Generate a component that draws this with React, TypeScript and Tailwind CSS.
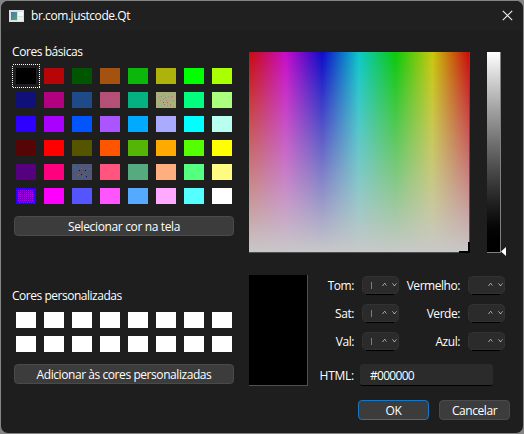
import React from "react";

const basicColors: string[][] = [
  ["#000000", "#b70507", "#005500", "#a35210", "#0ab70a", "#adb30a", "#00ff00", "#aaff00"],
  ["#10107a", "#b10080", "#1e4b87", "#b45078", "#05b180", "#aab07c", "#00ff7f", "#aaff7f"],
  ["#2d00ff", "#aa00ff", "#0055ff", "#aa55ff", "#00aaff", "#aaaaff", "#00ffff", "#b8fff0"],
  ["#550505", "#ff0000", "#555500", "#ff5500", "#55b507", "#ffaa00", "#55ff00", "#ffff00"],
  ["#55007f", "#ff007f", "#50587a", "#ff557f", "#55aa7f", "#ffaf7f", "#55ff7f", "#fffa82"],
  ["#2d00ff", "#ff00ff", "#5555ff", "#ff55ff", "#55aaff", "#ffaaff", "#55ffff", "#ffffff"],
];

// Dither specks inside a few swatches, as [x, y, colour].
const specks: Record<string, [number, number, string][]> = {
  "1-3": [[3, 6, "#8d6b80"], [7, 4, "#a56464"], [11, 3, "#8d6b80"], [15, 4, "#a56464"], [5, 9, "#8d6b80"], [9, 7, "#a56464"], [13, 7, "#8d6b80"], [17, 8, "#8d6b80"], [4, 13, "#8d6b80"], [8, 11, "#8d6b80"], [12, 13, "#8d6b80"], [14, 10, "#a56464"], [16, 13, "#8d6b80"]],
  "1-5": [[3, 4, "#c58a7c"], [5, 4, "#9a8a7a"], [8, 3, "#c58a7c"], [9, 5, "#b07a80"], [12, 4, "#9090a0"], [16, 4, "#c87080"], [15, 5, "#9a8a80"], [4, 8, "#9a8aa0"], [7, 7, "#9a8a7a"], [10, 8, "#c87080"], [13, 8, "#c58a7c"], [16, 9, "#9090a0"], [17, 8, "#c58a7c"], [7, 10, "#6f6070"], [11, 10, "#80708a"], [2, 13, "#9a8aa0"], [5, 13, "#c58a7c"], [8, 12, "#8a7080"], [14, 12, "#c87080"], [14, 13, "#c87080"], [17, 14, "#c58a7c"], [11, 13, "#9a8aa0"]],
  "4-2": [[7, 6, "#250060"], [13, 6, "#250060"], [9, 10, "#250060"], [14, 12, "#200050"], [15, 12, "#b03060"], [8, 6, "#8b4040"], [4, 4, "#306898"], [11, 3, "#306898"], [3, 8, "#306898"], [6, 10, "#806050"], [11, 8, "#306898"], [16, 9, "#306898"], [12, 12, "#306898"], [4, 13, "#306898"], [17, 4, "#706a60"], [5, 11, "#806050"], [10, 13, "#806050"], [15, 6, "#306898"], [9, 4, "#706a60"], [2, 3, "#706a60"], [12, 10, "#806050"], [17, 13, "#306898"]],
};

for (let y = 2; y < 15; y += 2)
  for (let x = 2; x < 18; x += 2)
    (specks["5-0"] ??= []).push([x + (y === 14 ? 1 : 0), y, "#a800ef"]);

function Swatch({ color, id, selected }: { color: string; id: string; selected?: boolean }) {
  return (
    <div className="relative h-4 w-5" style={{ backgroundColor: color }}>
      {specks[id] && (
        <svg className="block" width="20" height="16" shapeRendering="crispEdges">
          {specks[id].map(([x, y, c], i) => (
            <rect key={i} x={x} y={y} width="1" height="1" fill={c} />
          ))}
        </svg>
      )}
      {selected && (
        <svg className="absolute -left-1 -top-1" width="28" height="24" shapeRendering="crispEdges">
          <rect x="0.5" y="0.5" width="27" height="23" fill="none" stroke="#fff" strokeDasharray="1 1" />
        </svg>
      )}
    </div>
  );
}

function Button({ children, className = "" }: { children: React.ReactNode; className?: string }) {
  return (
    <button
      className={`flex h-5 items-center justify-center rounded-[4px] border bg-[#3c3c3c] pt-px whitespace-nowrap ${className}`}
    >
      {children}
    </button>
  );
}

// Chevron pixels with subpixel colour fringes, as [x, y, colour].
const chevrons: [number, number, string][] = [
  [20, 9, "#4a86c8"], [21, 8, "#7c9cc0"], [22, 7, "#d8925c"], [23, 8, "#d8925c"], [24, 9, "#7a6252"], [21, 9, "#6a5244"], [23, 7, "#4a5a70"],
  [30, 7, "#a8744c"], [31, 8, "#d8925c"], [32, 9, "#d8a078"], [33, 8, "#5c98dc"], [34, 7, "#4a86c8"], [31, 9, "#44566c"], [33, 9, "#44566c"],
];

function SpinBox({ cursor }: { cursor?: boolean }) {
  return (
    <svg className="block" width="37" height="19" viewBox="0 0 37 19">
      <rect x="0.5" y="0.5" width="36" height="17" rx="4" fill="#2b2b2b" stroke="#414141" strokeDasharray="1 1" />
      <path d="M4 18.5H32" stroke="#000" />
      {cursor && <path d="M9.5 6V13" stroke="#3b8cdc" />}
      {chevrons.map(([x, y, c], i) => (
        <rect key={i} x={x} y={y} width="1" height="1" fill={c} />
      ))}
    </svg>
  );
}

export default function App() {
  return (
    <div className="h-[434px] w-[524px] bg-[#858585] p-px font-['Open_Sans','Noto_Sans',sans-serif] text-[12px] leading-4 tracking-[-0.43px] text-white">
      <div className="flex h-[432px] w-[522px] flex-col overflow-hidden rounded-[7px] bg-[#1e1e1e]">
        <header className="flex h-[30px] shrink-0 items-center bg-[#202020] pl-2 pr-[10px]">
          <svg width="15" height="12" viewBox="0 0 15 12" className="-mt-px shrink-0">
            <defs>
              <linearGradient id="app-icon" x1="0" y1="0" x2="1" y2="1">
                <stop offset="0" stopColor="#4777b8" />
                <stop offset="1" stopColor="#55a66c" />
              </linearGradient>
            </defs>
            <rect width="15" height="12" fill="#dce1e6" />
            <rect x="2" y="2" width="6" height="8" fill="url(#app-icon)" />
            <rect x="9" y="2" width="5" height="4" fill="#f8f8f8" />
            <rect x="9" y="7" width="5" height="4" fill="#eceef2" />
          </svg>
          <span className="ml-[7px]">br.com.justcode.Qt</span>
          <svg className="-mt-[2px] ml-auto" width="11" height="11" viewBox="0 0 11 11">
            <path d="M0.8 0.8L10.2 10.2M10.2 0.8L0.8 10.2" stroke="#f0f0f0" strokeWidth="1.1" />
          </svg>
        </header>

        <div className="flex grow">
          <section className="flex w-[248px] shrink-0 flex-col pl-[11px] pt-[13px]">
            <div className="h-4">Cores básicas</div>
            <div className="ml-1 mt-2 grid w-[216px] grid-cols-8 gap-2">
              {basicColors.flatMap((row, r) =>
                row.map((c, i) => (
                  <Swatch key={`${r}-${i}`} id={`${r}-${i}`} color={c} selected={r === 0 && i === 0} />
                )),
              )}
            </div>
            <Button className="ml-[2px] mt-3 w-[220px] border-[#4a4a4c] tracking-[-0.36px]">Selecionar cor na tela</Button>
            <div className="mt-[52px] h-4 tracking-[-0.48px]">Cores personalizadas</div>
            <div className="ml-1 mt-2 grid w-[216px] grid-cols-8 gap-2">
              {Array.from({ length: 16 }, (_, i) => (
                <Swatch key={i} id={`c${i}`} color="#ffffff" />
              ))}
            </div>
            <Button className="ml-[2px] mt-3 w-[220px] border-[#4a4a4c]">Adicionar às cores personalizadas</Button>
          </section>

          <section className="flex grow flex-col pt-[21px]">
            <div className="flex h-[201px]">
              <div className="relative h-[201px] w-[221px] border-b border-r border-[#505052] bg-[linear-gradient(to_bottom,rgba(200,200,200,0.06),rgb(200,200,200)),linear-gradient(to_right,#c80000,#c800c8,#0000c8,#00c8c8,#00c800,#c8c800,#c80000)]">
                <div className="absolute -bottom-px -right-px h-[11px] w-[11px] border-b-2 border-r-2 border-black" />
              </div>
              <div className="ml-[17px] h-[201px] w-[14px] border-b border-r border-[#808080] bg-gradient-to-b from-white to-black" />
              <svg className="mt-[195px] shrink-0 overflow-visible" width="5" height="9" viewBox="0 0 5 9">
                <path d="M0 4.5L5 0V9Z" fill="#fff" />
              </svg>
            </div>

            <div className="mt-[22px] flex">
              <div className="h-[111px] w-[59px] shrink-0 border-b border-r border-[#505050] bg-black" />
              <div className="flex flex-col pt-px">
                <div className="flex flex-col gap-[9px]">
                  {[
                    ["Tom:", "Vermelho:"],
                    ["Sat:", "Verde:"],
                    ["Val:", "Azul:"],
                  ].map(([a, b]) => (
                    <div key={a} className="flex h-[19px] items-center">
                      <span className="w-[46px] text-right">{a}</span>
                      <div className="ml-2">
                        <SpinBox cursor />
                      </div>
                      <span className="w-[61px] text-right tracking-[-0.45px]">{b}</span>
                      <div className="ml-2">
                        <SpinBox />
                      </div>
                    </div>
                  ))}
                </div>
                <div className="mt-[13px] flex h-[22px] items-center">
                  <span className="w-[46px] pt-[2px] text-right tracking-[-0.24px]">HTML:</span>
                  <div className="ml-[6px] flex h-[22px] w-[133px] items-center rounded-[3px] border-b border-black bg-[#2b2b2b] pl-[10px] pt-[3px] tracking-[-0.7px]">
                    #000000
                  </div>
                </div>
              </div>
            </div>

            <div className="mt-[14px] flex gap-[10px] pl-[109px]">
              <Button className="w-[71px] border-[#1877c4]">OK</Button>
              <Button className="w-[71px] border-[#4a4a4c]">Cancelar</Button>
            </div>
          </section>
        </div>
      </div>
    </div>
  );
}
